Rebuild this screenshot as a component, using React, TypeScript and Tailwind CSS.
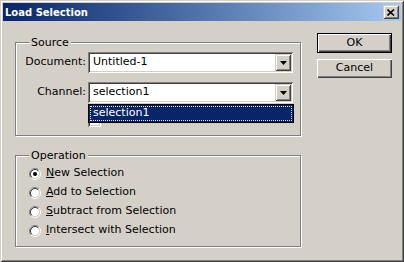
import React from 'react';

const font = { fontFamily: '"DejaVu Sans", Verdana, sans-serif' };

const raised =
  'shadow-[inset_1px_1px_0_#d4d0c8,inset_-1px_-1px_0_#404040,inset_2px_2px_0_#ffffff,inset_-2px_-2px_0_#808080]';
const sunken =
  'shadow-[inset_1px_1px_0_#808080,inset_-1px_-1px_0_#ffffff,inset_2px_2px_0_#404040,inset_-2px_-2px_0_#d4d0c8]';
const etched = 'border border-[#808080] shadow-[inset_1px_1px_0_#ffffff,1px_1px_0_#ffffff]';
const button = 'shadow-[inset_1px_1px_0_#ffffff,inset_-1px_-1px_0_#404040,inset_-2px_-2px_0_#808080]';

const Arrow = () => (
  <svg width="7" height="4" viewBox="0 0 7 4">
    <path d="M0 0h7L3.5 4z" fill="#000" />
  </svg>
);

const Combo = ({ value }: { value: string }) => (
  <div className={`flex h-[21px] w-[205px] items-stretch bg-white p-[2px] ${sunken}`}>
    <div className="flex flex-1 items-center pl-[3px] text-[11px] text-black">{value}</div>
    <div className={`flex w-[16px] items-center justify-center bg-[#d4d0c8] ${raised}`}>
      <Arrow />
    </div>
  </div>
);

const Radio = ({ checked }: { checked?: boolean }) => (
  <svg width="12" height="12" viewBox="0 0 12 12" className="shrink-0">
    <circle cx="6" cy="6" r="4.2" fill="#fff" />
    <path d="M2.11 9.89 A5.5 5.5 0 0 1 9.89 2.11" fill="none" stroke="#808080" />
    <path d="M9.89 2.11 A5.5 5.5 0 0 1 2.11 9.89" fill="none" stroke="#fff" />
    <path d="M2.82 9.18 A4.5 4.5 0 0 1 9.18 2.82" fill="none" stroke="#404040" />
    <path d="M9.18 2.82 A4.5 4.5 0 0 1 2.82 9.18" fill="none" stroke="#d4d0c8" />
    {checked && <circle cx="6" cy="6" r="2" fill="#000" />}
  </svg>
);

const GroupBox = ({ title, className, children }: { title: string; className: string; children: React.ReactNode }) => (
  <div className={`relative ${etched} ${className}`}>
    <span className="absolute left-[13px] top-[-7px] bg-[#d4d0c8] px-[2px] text-[11px] leading-[13px] text-black">
      {title}
    </span>
    {children}
  </div>
);

const options = [
  { key: 'N', rest: 'ew Selection', checked: true },
  { key: 'A', rest: 'dd to Selection' },
  { key: 'S', rest: 'ubtract from Selection' },
  { key: 'I', rest: 'ntersect with Selection' },
];

export default function App() {
  return (
    <div
      style={font}
      className={`flex h-[262px] w-[404px] flex-col bg-[#d4d0c8] p-[3px] text-[11px] text-black ${raised}`}
    >
      {/* title bar */}
      <div className="flex h-[18px] items-center justify-between bg-gradient-to-r from-[#0a246a] to-[#a6caf0] pl-[2px] pr-[2px]">
        <span className="text-[10px] font-bold text-white">Load Selection</span>
        <div className={`flex h-[14px] w-[16px] items-center justify-center bg-[#d4d0c8] ${raised}`}>
          <svg width="8" height="7" viewBox="0 0 8 7">
            <path d="M0.5 0.5L7 6.5M7 0.5L0.5 6.5" stroke="#000" strokeWidth="1.6" />
          </svg>
        </div>
      </div>

      <div className="flex">
        <div className="ml-[12px] mt-[21px] flex w-[286px] flex-col">
          <GroupBox title="Source" className="h-[94px]">
            <div className="flex flex-col gap-[9px] pt-[9px]">
              <div className="flex items-center">
                <span className="w-[70px] text-right">Document:</span>
                <div className="ml-[2px]">
                  <Combo value="Untitled-1" />
                </div>
              </div>
              <div className="flex items-center">
                <span className="w-[70px] text-right">Channel:</span>
                <div className="relative ml-[2px]">
                  <Combo value="selection1" />
                  <div className="absolute left-0 top-[22px] z-10 h-[19px] w-[206px] border border-black bg-[#0a246a] p-[1px]">
                    <div className="flex h-full items-center border border-dotted border-[#f0e6b0] pl-[2px] text-white">
                      selection1
                    </div>
                  </div>
                </div>
              </div>
              {/* Invert checkbox, mostly hidden under the open list */}
              <div className="ml-[72px] flex h-[17px] items-center">
                <div className={`h-[13px] w-[13px] bg-white ${sunken}`} />
              </div>
            </div>
          </GroupBox>

          <GroupBox title="Operation" className="mt-[19px] h-[92px]">
            <div className="flex flex-col pl-[13px] pt-[8px]">
              {options.map((o) => (
                <div key={o.key} className="flex h-[19px] items-center gap-[5px]">
                  <Radio checked={o.checked} />
                  <span>
                    <span className="underline">{o.key}</span>
                    {o.rest}
                  </span>
                </div>
              ))}
            </div>
          </GroupBox>
        </div>

        <div className="ml-[16px] mt-[12px] flex flex-col gap-[6px]">
          <div className="h-[20px] w-[75px] border border-black">
            <div className={`flex h-full items-center justify-center ${button}`}>OK</div>
          </div>
          <div className={`flex h-[19px] w-[75px] items-center justify-center ${button}`}>Cancel</div>
        </div>
      </div>
    </div>
  );
}
